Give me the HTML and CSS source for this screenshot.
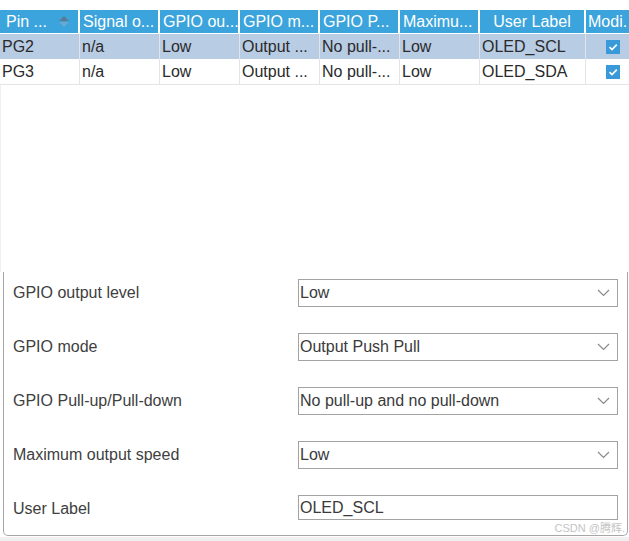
FILE: index.html
```html
<!DOCTYPE html>
<html>
<head>
<meta charset="utf-8">
<link rel="stylesheet" href="styles.css">
</head>
<body>
<div class="page">
  <div class="table">
    <div class="row head">
      <div class="cell c1">Pin ...<span class="sort"><span class="up"></span><span class="down"></span></span></div>
      <div class="cell">Signal o...</div>
      <div class="cell">GPIO ou...</div>
      <div class="cell">GPIO m...</div>
      <div class="cell">GPIO P...</div>
      <div class="cell">Maximu...</div>
      <div class="cell center">User Label</div>
      <div class="cell last">Modi.</div>
    </div>
    <div class="row body sel">
      <div class="cell">PG2</div>
      <div class="cell">n/a</div>
      <div class="cell">Low</div>
      <div class="cell">Output ...</div>
      <div class="cell">No pull-...</div>
      <div class="cell">Low</div>
      <div class="cell">OLED_SCL</div>
      <div class="cell chk"><span class="box"><svg width="14" height="14" viewBox="0 0 14 14"><path d="M3.5 7.2 L6 9.6 L10.8 4.6" fill="none" stroke="#fff" stroke-width="1.6"/></svg></span></div>
    </div>
    <div class="row body">
      <div class="cell">PG3</div>
      <div class="cell">n/a</div>
      <div class="cell">Low</div>
      <div class="cell">Output ...</div>
      <div class="cell">No pull-...</div>
      <div class="cell">Low</div>
      <div class="cell">OLED_SDA</div>
      <div class="cell chk"><span class="box"><svg width="14" height="14" viewBox="0 0 14 14"><path d="M3.5 7.2 L6 9.6 L10.8 4.6" fill="none" stroke="#fff" stroke-width="1.6"/></svg></span></div>
    </div>
  </div>
  <div class="spacer"></div>
  <div class="panel">
    <div class="prow">
      <div class="label">GPIO output level</div>
      <div class="field select"><span>Low</span><svg class="chev" width="13" height="8" viewBox="0 0 13 8"><path d="M1 1 L6.5 6.5 L12 1" fill="none" stroke="#8a8a8a" stroke-width="1.2"/></svg></div>
    </div>
    <div class="prow">
      <div class="label">GPIO mode</div>
      <div class="field select"><span>Output Push Pull</span><svg class="chev" width="13" height="8" viewBox="0 0 13 8"><path d="M1 1 L6.5 6.5 L12 1" fill="none" stroke="#8a8a8a" stroke-width="1.2"/></svg></div>
    </div>
    <div class="prow">
      <div class="label">GPIO Pull-up/Pull-down</div>
      <div class="field select"><span>No pull-up and no pull-down</span><svg class="chev" width="13" height="8" viewBox="0 0 13 8"><path d="M1 1 L6.5 6.5 L12 1" fill="none" stroke="#8a8a8a" stroke-width="1.2"/></svg></div>
    </div>
    <div class="prow">
      <div class="label">Maximum output speed</div>
      <div class="field select"><span>Low</span><svg class="chev" width="13" height="8" viewBox="0 0 13 8"><path d="M1 1 L6.5 6.5 L12 1" fill="none" stroke="#8a8a8a" stroke-width="1.2"/></svg></div>
    </div>
    <div class="prow">
      <div class="label">User Label</div>
      <div class="field input"><span>OLED_SCL</span></div>
    </div>
    <div class="watermark">CSDN @腾辉.</div>
  </div>
  <div class="footer"></div>
</div>
</body>
</html>
```
FILE: styles.css
```css
html, body {
  margin: 0;
  padding: 0;
  background: #ffffff;
}
body {
  font-family: "Liberation Sans", Arial, "Noto Sans CJK SC", sans-serif;
  font-size: 16px;
  color: #2a2a2a;
}
.page {
  width: 629px;
  height: 541px;
  display: flex;
  flex-direction: column;
  overflow: hidden;
}
.table {
  padding-top: 10px;
  border-bottom: 1px solid #e2e4e8;
}
.row {
  display: grid;
  grid-template-columns: 80px 80px 80px 80px 80px 80px 106px 43px;
}
.cell {
  box-sizing: border-box;
  white-space: nowrap;
  overflow: hidden;
}
.head .cell {
  height: 24px;
  line-height: 23px;
  background: #3ba4dc;
  color: #ffffff;
  border-right: 2px solid #ffffff;
  border-bottom: 1px solid #ffffff;
  padding-left: 3px;
}
.head .cell.last {
  border-right: none;
  padding-left: 2px;
}
.head .cell.center {
  text-align: center;
  padding-left: 0;
}
.head .c1 {
  padding-left: 6px;
  display: flex;
  align-items: center;
}
.sort {
  margin-left: 12px;
  display: flex;
  flex-direction: column;
  gap: 1px;
}
.sort .up {
  width: 0;
  height: 0;
  border-left: 5px solid transparent;
  border-right: 5px solid transparent;
  border-bottom: 5px solid #5a7c93;
}
.sort .down {
  width: 0;
  height: 0;
  border-left: 5px solid transparent;
  border-right: 5px solid transparent;
  border-top: 5px solid #6aa8d2;
}
.body .cell {
  height: 25px;
  line-height: 25px;
  padding-left: 2px;
  border-right: 1px solid #e2e4e8;
}
.body .cell:last-child {
  border-right: none;
}
.sel {
  background: #b8cce4;
}
.chk {
  display: flex;
  align-items: center;
  justify-content: flex-end;
  padding-right: 9px;
}
.box {
  width: 14px;
  height: 14px;
  background: #3a9ad9;
  display: block;
}
.box svg {
  display: block;
}
.spacer {
  height: 187px;
  border-left: 1px solid #eef0f2;
}
.panel {
  position: relative;
  margin: 0 1px 0 3px;
  height: 264px;
  box-sizing: border-box;
  border-left: 1px solid #a4a6a8;
  border-right: 1px solid #a4a6a8;
  border-bottom: 1px solid #a4a6a8;
  border-radius: 0 0 5px 5px;
  padding: 7px 9px 0 9px;
  display: flex;
  flex-direction: column;
  gap: 26px;
}
.prow {
  display: flex;
  align-items: center;
  justify-content: space-between;
  height: 28px;
}
.label {
  color: #404040;
}
.field {
  box-sizing: border-box;
  width: 320px;
  height: 28px;
  border: 1px solid #a3a3a3;
  display: flex;
  align-items: center;
  justify-content: space-between;
  padding: 0 7px 0 1px;
  color: #3a3a3a;
  background: #ffffff;
}
.field.input {
  height: 25px;
  align-self: flex-start;
}
.chev {
  display: block;
}
.watermark {
  position: absolute;
  right: 2px;
  bottom: 0px;
  font-size: 11px;
  color: #c4c4c4;
  line-height: 14px;
}
.footer {
  flex: 1;
  background: #f0f0f0;
  margin-top: 1px;
}
```
